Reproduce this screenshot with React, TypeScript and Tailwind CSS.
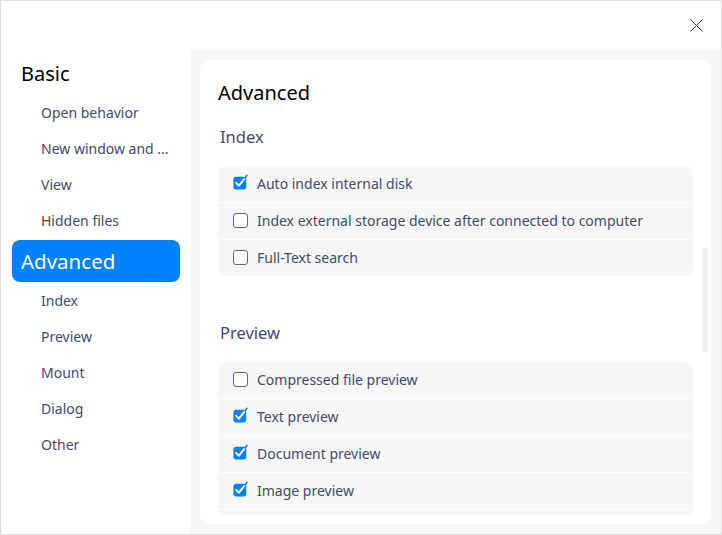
import React from 'react';

const navTop = ['Open behavior', 'New window and ...', 'View', 'Hidden files'];
const navBottom = ['Index', 'Preview', 'Mount', 'Dialog', 'Other'];

interface Option {
  label: string;
  checked: boolean;
}

const indexOptions: Option[] = [
  { label: 'Auto index internal disk', checked: true },
  { label: 'Index external storage device after connected to computer', checked: false },
  { label: 'Full-Text search', checked: false },
];

// last row is scrolled mostly out of view
const previewOptions: Option[] = [
  { label: 'Compressed file preview', checked: false },
  { label: 'Text preview', checked: true },
  { label: 'Document preview', checked: true },
  { label: 'Image preview', checked: true },
  { label: '', checked: true },
];

function CheckBox({ checked }: { checked: boolean }) {
  if (!checked) {
    return <span className="block w-[15px] h-[15px] rounded-[3px] border-[1.5px] border-[#5f6677] bg-white" />;
  }
  return (
    <svg width="17" height="18" viewBox="0 0 17 18" className="block mt-[-2px]">
      <rect x="0.5" y="3" width="14.5" height="14.5" rx="3" fill="#0081ff" />
      <polyline points="3.5,10 6.8,13.2 13.2,5" fill="none" stroke="#ffffff" strokeWidth="2.2" strokeLinecap="round" strokeLinejoin="round" />
      <line x1="13.6" y1="4.4" x2="15.8" y2="1.4" stroke="#0081ff" strokeWidth="1.8" strokeLinecap="round" />
    </svg>
  );
}

function Group({ options }: { options: Option[] }) {
  return (
    <div className="rounded-[8px] bg-[#f7f7f7] overflow-hidden">
      {options.map((o, i) => (
        <div
          key={i}
          className={`flex items-center pl-[15px] pb-[2px] gap-[9px] ${i > 0 ? 'h-[37px] border-t border-white' : 'h-[36px]'}`}
        >
          {o.label && (
            <>
              <span className="w-[15px] flex justify-center">
                <CheckBox checked={o.checked} />
              </span>
              <span className="text-[14px] text-[#414d68]">{o.label}</span>
            </>
          )}
        </div>
      ))}
    </div>
  );
}

export default function App() {
  return (
    <div
      className="w-[722px] h-[535px] border border-[#dedede] bg-white flex flex-col"
      style={{ fontFamily: '"Noto Sans", sans-serif' }}
    >
      {/* title bar */}
      <div className="h-[49px] flex justify-end items-center pr-[18px] shrink-0">
        <svg width="13" height="13" viewBox="0 0 13 13">
          <path d="M0.5 0.5 L12.5 12.5 M12.5 0.5 L0.5 12.5" stroke="#2d3550" strokeWidth="1" />
        </svg>
      </div>

      <div className="flex flex-1 min-h-0">
        {/* sidebar */}
        <div className="w-[190px] shrink-0 bg-white">
          <div className="mt-[3px] h-[41px] flex items-center pl-[20px] text-[20px] text-black">Basic</div>
          {navTop.map((n) => (
            <div key={n} className="h-[36px] flex items-center pl-[40px] pr-[10px] text-[14px] text-[#414d68]">
              {n}
            </div>
          ))}
          <div className="mt-[2px] ml-[11px] w-[168px] h-[42px] rounded-[8px] bg-[#0081ff] flex items-center pl-[9px] pt-[1px] text-[20.5px] text-white">
            Advanced
          </div>
          {navBottom.map((n) => (
            <div key={n} className="h-[36px] flex items-center pl-[40px] text-[14px] text-[#414d68]">
              {n}
            </div>
          ))}
        </div>

        {/* content */}
        <div className="flex-1 bg-[#f7f7f7] pt-[10px] pl-[9px] pr-[10px] pb-[10px]">
          <div className="relative h-full bg-white rounded-[10px]">
            <div className="h-[455px] overflow-hidden px-[18px] pt-[19px]">
              <div className="text-[20px] leading-[28px] text-black">Advanced</div>
              <div className="mt-[18px] pl-[2px] text-[16.5px] leading-[24px] text-[#414d68]">Index</div>
              <div className="mt-[17px]">
                <Group options={indexOptions} />
              </div>
              <div className="mt-[45px] pl-[2px] text-[16.5px] leading-[24px] text-[#414d68]">Preview</div>
              <div className="mt-[17px]">
                <Group options={previewOptions} />
              </div>
            </div>
            <div className="absolute right-[3px] top-[188px] w-[6px] h-[104px] rounded-full bg-[#f1f1f1]" />
          </div>
        </div>
      </div>
    </div>
  );
}
